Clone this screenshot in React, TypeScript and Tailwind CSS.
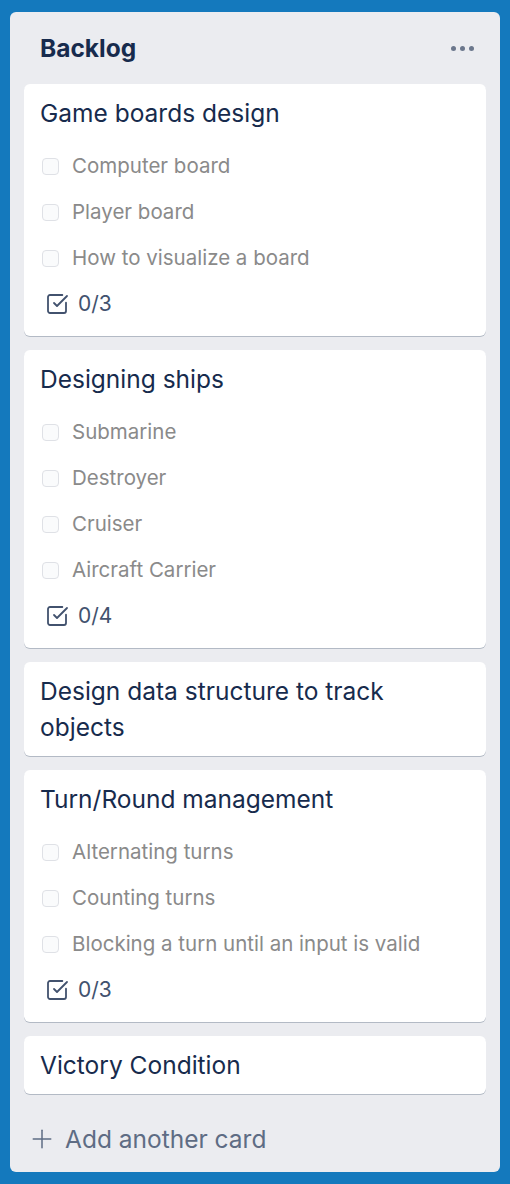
import React from 'react';
import { Plus, SquareCheckBig } from 'lucide-react';

interface CardData {
    title: string;
    items: string[];
}

const cards: CardData[] = [
    { title: 'Game boards design', items: ['Computer board', 'Player board', 'How to visualize a board'] },
    { title: 'Designing ships', items: ['Submarine', 'Destroyer', 'Cruiser', 'Aircraft Carrier'] },
    { title: 'Design data structure to track objects', items: [] },
    { title: 'Turn/Round management', items: ['Alternating turns', 'Counting turns', 'Blocking a turn until an input is valid'] },
    { title: 'Victory Condition', items: [] },
];

const Card: React.FC<{ card: CardData }> = ({ card }) => {
    const hasList = card.items.length > 0;
    return (
        <div className={`bg-white rounded-[6px] shadow-[0_1px_0_#b3bac5] px-4 pt-[10px] ${hasList ? 'pb-[9px]' : 'pb-[12px]'}`}>
            <div className="text-[24.5px] leading-[36px] text-[#172b4d] pr-10 translate-y-[1px]">{card.title}</div>
            {hasList && (
                <div className="mt-[13px]">
                    {card.items.map((item) => (
                        <div key={item} className="h-[46px] flex items-center">
                            <span className="w-[17px] h-[17px] ml-[2px] rounded-[4px] border border-[#dfe1e6] bg-[#fafbfc]" />
                            <span className="ml-[13px] text-[20.5px] text-[#8a8a8a]">{item}</span>
                        </div>
                    ))}
                    <div className="h-[46px] flex items-center text-[#42526e]">
                        <SquareCheckBig className="ml-[5px] w-[24px] h-[24px]" strokeWidth={1.8} />
                        <span className="ml-[9px] text-[21px]">0/{card.items.length}</span>
                    </div>
                </div>
            )}
        </div>
    );
};

export default function App() {
    return (
        <div className="w-[510px] h-[1184px] bg-[#1479bd] pt-[12px] px-[10px]" style={{ fontFamily: 'Inter, "Noto Sans", sans-serif' }}>
            <div className="bg-[#ebecf0] rounded-[6px] h-[1160px] flex flex-col">
                <div className="h-[72px] flex items-center justify-between pl-[30px] pr-[26px]">
                    <span className="text-[24.5px] font-bold text-[#172b4d]">Backlog</span>
                    <span className="flex gap-[4px]">
                        <span className="w-[5px] h-[5px] rounded-full bg-[#6b778c]" />
                        <span className="w-[5px] h-[5px] rounded-full bg-[#6b778c]" />
                        <span className="w-[5px] h-[5px] rounded-full bg-[#6b778c]" />
                    </span>
                </div>
                <div className="flex flex-col gap-[14px] px-[14px]">
                    {cards.map((c) => (
                        <Card key={c.title} card={c} />
                    ))}
                </div>
                <div className="flex items-center mt-[27px] pl-[17px] text-[#5e6c84]">
                    <Plus className="w-[30px] h-[30px]" strokeWidth={1.2} />
                    <span className="ml-[8px] text-[24.5px]">Add another card</span>
                </div>
            </div>
        </div>
    );
}
